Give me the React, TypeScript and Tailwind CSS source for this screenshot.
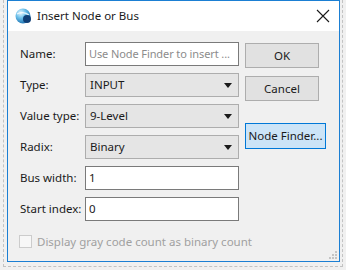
import React from 'react';

const font = { fontFamily: '"Noto Sans", "Segoe UI", sans-serif' };

const Arrow: React.FC = () => (
  <svg width="8" height="5" viewBox="0 0 8 5" className="shrink-0">
    <path d="M0 0 H8 L4 5 Z" fill="#1a1a1a" />
  </svg>
);

const Combo: React.FC<{ value: string }> = ({ value }) => (
  <div className="w-[154px] h-[24px] border border-[#adadad] bg-[#e5e5e5] flex items-center justify-between pl-[4px] pr-[6px] text-[11.5px] text-[#1a1a1a]">
    <span>{value}</span>
    <Arrow />
  </div>
);

const TextBox: React.FC<{ value?: string; placeholder?: string }> = ({ value, placeholder }) => (
  <div className="w-[154px] h-[24px] border border-[#7a7a7a] bg-white flex items-center px-[3px] text-[11.5px] overflow-hidden whitespace-nowrap">
    {value ? (
      <span className="text-[#1a1a1a]">{value}</span>
    ) : (
      <span className="text-[#8c8c8c] text-[11px] tracking-[-0.1px]">{placeholder}</span>
    )}
  </div>
);

const Row: React.FC<{ label: string; children: React.ReactNode }> = ({ label, children }) => (
  <div className="flex items-center h-[24px]">
    <div className="w-[65px] text-[11.5px] text-[#1a1a1a] whitespace-nowrap">{label}</div>
    {children}
  </div>
);

const App: React.FC = () => {
  return (
    <div className="w-[346px] h-[270px] bg-[#f0f0f0] pl-[3px] overflow-hidden" style={font}>
      <div className="w-[340px] h-[267px] border-l border-r border-b border-dashed border-[#c2c2c2] pl-[3px]">
        <div className="w-[333px] h-[262px] border border-[#1b7fd3] bg-[#f0f0f0] flex flex-col">
          {/* Title bar */}
          <div className="h-[30px] bg-white flex items-center pl-[7px] pr-[8px]">
            <svg width="17" height="16" viewBox="0 0 17 16">
              <defs>
                <radialGradient id="ball" cx="0.35" cy="0.3" r="0.75">
                  <stop offset="0" stopColor="#e8f6ff" />
                  <stop offset="0.45" stopColor="#6cc0ea" />
                  <stop offset="1" stopColor="#1a6fae" />
                </radialGradient>
              </defs>
              <circle cx="8" cy="8" r="7.5" fill="url(#ball)" />
              <path d="M2 6 C5 4 10 4 14 7" stroke="#ffffff" strokeWidth="1.4" fill="none" opacity="0.8" />
              <circle cx="12" cy="11" r="4" fill="#0f3f77" />
            </svg>
            <span className="ml-[5px] text-[11.5px] text-[#1a1a1a] flex-1">Insert Node or Bus</span>
            <svg width="14" height="14" viewBox="0 0 14 14" className="mr-[1px]">
              <path d="M1 1 L13 13 M13 1 L1 13" stroke="#1a1a1a" strokeWidth="1.1" />
            </svg>
          </div>

          {/* Body */}
          <div className="flex-1 relative pl-[12px] pt-[11px]">
            <div className="flex">
              <div className="flex flex-col gap-[7px]">
                <Row label="Name:">
                  <TextBox placeholder="Use Node Finder to insert ..." />
                </Row>
                <Row label="Type:">
                  <Combo value="INPUT" />
                </Row>
                <Row label="Value type:">
                  <Combo value="9-Level" />
                </Row>
                <Row label="Radix:">
                  <Combo value="Binary" />
                </Row>
                <Row label="Bus width:">
                  <TextBox value="1" />
                </Row>
                <Row label="Start index:">
                  <TextBox value="0" />
                </Row>
              </div>
              <div className="ml-[6px] pt-[1px] flex flex-col items-start">
                <button className="w-[74px] h-[25px] border border-[#adadad] bg-[#e1e1e1] text-[11.5px] text-[#1a1a1a]">OK</button>
                <button className="mt-[8px] w-[74px] h-[25px] border border-[#adadad] bg-[#e1e1e1] text-[11.5px] text-[#1a1a1a]">Cancel</button>
                <button className="mt-[22px] w-[81px] h-[26px] border border-[#0078d7] bg-[#cce4f7] text-[11.5px] text-[#1a1a1a]">Node Finder...</button>
              </div>
            </div>

            <div className="flex items-center mt-[12px] -ml-[1px]">
              <div className="w-[13px] h-[13px] border border-[#cccccc] bg-[#f7f7f7]" />
              <span className="ml-[5px] text-[11.5px] text-[#a0a0a0]">Display gray code count as binary count</span>
            </div>

            {/* resize grip */}
            <svg width="8" height="8" viewBox="0 0 8 8" className="absolute right-[2px] bottom-[2px]">
              <rect x="6" y="0" width="2" height="2" fill="#c4c4c4" />
              <rect x="3" y="3" width="2" height="2" fill="#c4c4c4" />
              <rect x="6" y="3" width="2" height="2" fill="#c4c4c4" />
              <rect x="0" y="6" width="2" height="2" fill="#c4c4c4" />
              <rect x="3" y="6" width="2" height="2" fill="#c4c4c4" />
              <rect x="6" y="6" width="2" height="2" fill="#c4c4c4" />
            </svg>
          </div>
        </div>
      </div>
    </div>
  );
};

export default App;
